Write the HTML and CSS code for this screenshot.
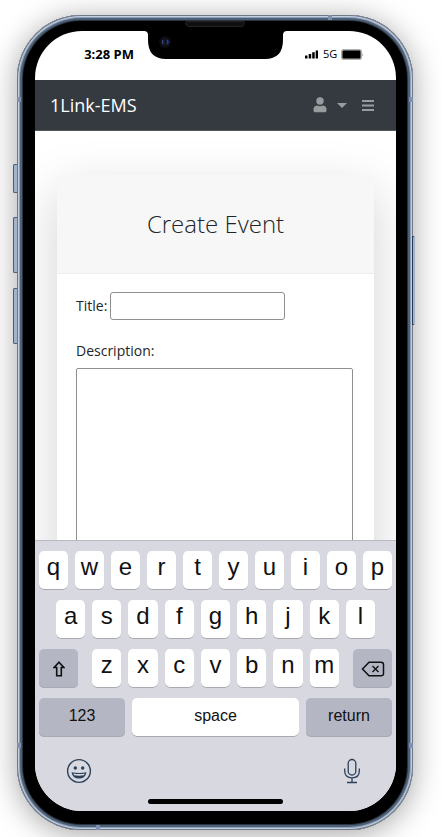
FILE: index.html
```html
<!DOCTYPE html>
<html lang="en">
<head>
<meta charset="utf-8">
<meta name="viewport" content="width=device-width, initial-scale=1">
<title>1Link-EMS</title>
<link rel="stylesheet" href="styles.css">
</head>
<body>
<div class="phone">
  <span class="side-button mute"></span>
  <span class="side-button volume-up"></span>
  <span class="side-button volume-down"></span>
  <span class="side-button power"></span>
  <span class="band band-top"></span>
  <span class="band band-bottom"></span>
  <span class="band band-left-high"></span>
  <span class="band band-left-low"></span>
  <span class="band band-right-high"></span>
  <span class="band band-right-low"></span>
  <span class="speaker"></span>

  <div class="screen">
    <div class="status">
      <span class="time">3:28 PM</span>
      <svg class="notch" width="143" height="29" viewBox="0 0 143 29" aria-hidden="true">
        <path d="M0 0H143Q139 0 139 4V9Q139 28 121 28H22Q4 28 4 9V4Q4 0 0 0Z" fill="#000"/>
        <circle cx="21" cy="11" r="6" fill="#0c0c11"/>
        <circle cx="21" cy="11" r="4" fill="#11131f"/>
        <path d="M19 9Q18 11 19 13" stroke="#3c4c80" stroke-width="1.3" fill="none"/>
        <path d="M23 9Q25 11 23 13" stroke="#26379c" stroke-width="1.6" fill="none"/>
      </svg>
      <div class="indicators">
        <svg width="14" height="9" viewBox="0 0 14 9" aria-hidden="true">
          <path d="M0 5.5h2.5V8.500H0zM3.700 4h2.500v4.500H3.700zM7.200 2.300h2.500v6.200H7.200zM10.700 0.500h2.300v8H10.700z" fill="#000"/>
        </svg>
        <span class="network">5G</span>
        <svg width="23" height="11" viewBox="0 0 23 11" aria-hidden="true">
          <rect x="0" y="0" width="21" height="11" rx="2.800" fill="#b0b0b0"/>
          <rect x="1.500" y="1.500" width="18" height="8" rx="1.300" fill="#000"/>
          <path d="M21.300 3.500Q23 5.500 21.300 7.500Z" fill="#aaa"/>
        </svg>
      </div>
    </div>

    <nav class="navbar">
      <a class="brand" href="#">1Link-EMS</a>
      <button class="nav-button account" type="button" aria-label="Account">
        <svg width="14" height="16" viewBox="0 0 14 16" aria-hidden="true">
          <circle cx="7" cy="4" r="3.700" fill="currentColor"/>
          <path d="M4 8.500Q7 9.800 10 8.500Q13.500 8.900 13.500 12.500V13.500Q13.500 15.300 12 15.300H2Q.5 15.300 .5 13.500V12.500Q.5 8.900 4 8.500Z" fill="currentColor"/>
        </svg>
        <svg width="10" height="5" viewBox="0 0 10 5" aria-hidden="true"><path d="M0 0H10L5 5Z" fill="currentColor"/></svg>
      </button>
      <button class="nav-button" type="button" aria-label="Menu">
        <svg width="12" height="12" viewBox="0 0 12 12" aria-hidden="true"><path d="M0 2H12M0 6.500H12M0 11H12" stroke="currentColor" stroke-width="1.800"/></svg>
      </button>
    </nav>

    <main class="content">
      <section class="card">
        <h1 class="card-title">Create Event</h1>
        <form class="form">
          <div class="field">
            <label for="title">Title:</label>
            <input id="title" class="title-input" type="text">
          </div>
          <label for="description">Description:</label>
          <textarea id="description" class="description"></textarea>
        </form>
      </section>
    </main>

    <div class="keyboard">
      <div class="keys">
        <button class="key" type="button">q</button><button class="key" type="button">w</button><button class="key" type="button">e</button><button class="key" type="button">r</button><button class="key" type="button">t</button><button class="key" type="button">y</button><button class="key" type="button">u</button><button class="key" type="button">i</button><button class="key" type="button">o</button><button class="key" type="button">p</button>
      </div>
      <div class="keys keys-home">
        <button class="key" type="button">a</button><button class="key" type="button">s</button><button class="key" type="button">d</button><button class="key" type="button">f</button><button class="key" type="button">g</button><button class="key" type="button">h</button><button class="key" type="button">j</button><button class="key" type="button">k</button><button class="key" type="button">l</button>
      </div>
      <div class="keys keys-third">
        <button class="key key-icon" type="button" aria-label="Shift">
          <svg width="12" height="16" viewBox="0 0 12 16" aria-hidden="true"><path d="M6 1.300L10.800 6.500H8.300V14.800H3.700V6.500H1.200Z" fill="none" stroke="#111" stroke-width="1.600"/></svg>
        </button>
        <div class="keys letters">
          <button class="key" type="button">z</button><button class="key" type="button">x</button><button class="key" type="button">c</button><button class="key" type="button">v</button><button class="key" type="button">b</button><button class="key" type="button">n</button><button class="key" type="button">m</button>
        </div>
        <button class="key key-icon" type="button" aria-label="Delete">
          <svg width="24" height="16" viewBox="0 0 24 16" aria-hidden="true"><path d="M1.500 8L8 1.200H20Q22.500 1.200 22.500 3.500V12.500Q22.500 14.800 20 14.800H8Z" fill="none" stroke="#111" stroke-width="1.500"/><path d="M11.500 5L17.500 11M17.500 5L11.500 11" stroke="#111" stroke-width="1.400"/></svg>
        </button>
      </div>
      <div class="keys">
        <button class="key key-word key-dark" type="button">123</button>
        <button class="key key-word" type="button">space</button>
        <button class="key key-word key-dark" type="button">return</button>
      </div>
      <div class="tools">
        <button class="tool" type="button" aria-label="Emoji">
          <svg width="26" height="26" viewBox="0 0 26 26" aria-hidden="true">
            <circle cx="13" cy="13" r="11.400" fill="none" stroke="#2b4059" stroke-width="1.400"/>
            <circle cx="9.300" cy="10" r="1.700" fill="#2b4059"/><circle cx="16.700" cy="10" r="1.700" fill="#2b4059"/>
            <path d="M5.500 14.300Q13 15.700 20.500 14.300Q19.500 20.600 13 20.600Q6.500 20.600 5.500 14.300Z" fill="#2b4059"/>
            <path d="M7.300 15.500Q13 16.500 18.700 15.500L17.900 17.300Q13 18.200 8.100 17.300Z" fill="#d8d8e0"/>
          </svg>
        </button>
        <button class="tool" type="button" aria-label="Dictate">
          <svg width="18" height="26" viewBox="0 0 18 26" aria-hidden="true" fill="none" stroke="#2b4059" stroke-width="1.300">
            <rect x="5.200" y="1.500" width="7.600" height="15.500" rx="3.800"/>
            <path d="M1.700 10.500V13Q1.700 19.800 9 19.800Q16.300 19.800 16.300 13V10.500M9 19.800V24.300M4 24.500H14"/>
          </svg>
        </button>
      </div>
      <div class="home-bar"></div>
    </div>
  </div>
</div>
</body>
</html>
```

FILE: styles.css
```css
* {
  box-sizing: border-box;
}

body {
  margin: 0;
  height: 100vh;
  display: flex;
  padding: 15px 29px 7px 17px;
  background: #fff;
  color: #212529;
  font: 14px/20px "Open Sans", "Noto Sans", sans-serif;
}

button {
  margin: 0;
  padding: 0;
  border: 0;
  background: none;
  color: inherit;
  font: inherit;
}

svg {
  display: block;
  flex: none;
}

/* Device frame */
.phone {
  position: relative;
  flex: 1;
  display: flex;
  min-width: 0;
  padding: 16px 17px 19px 18px;
  border-radius: 64px;
  background: #000;
  box-shadow:
    inset 0 0 0 1px #6f7886,
    inset 0 0 0 2px #c3cede,
    inset 0 0 0 3px #8e9fb8,
    inset 0 0 0 5px #4c6078,
    inset 0 0 0 6px #2c333c,
    0 4px 30px rgba(0, 0, 0, 0.36);
}

.side-button {
  position: absolute;
  left: -4px;
  width: 4px;
  border: 1px solid #4d5d73;
  border-right: 0;
  border-radius: 2px 0 0 2px;
  background: #a3b3c9;
}

.mute {
  top: 149px;
  height: 29px;
}

.volume-up {
  top: 202px;
  height: 56px;
}

.volume-down {
  top: 273px;
  height: 56px;
}

.power {
  top: 221px;
  right: -2px;
  left: auto;
  width: 3px;
  height: 89px;
  border: 1px solid #2c394d;
  border-right-color: #a3b3c9;
  border-radius: 0 2px 2px 0;
}

.band {
  position: absolute;
  width: 4px;
  height: 5px;
  background: #7f8fae;
}

.band-top {
  top: 0;
  right: 81px;
}

.band-bottom {
  bottom: 0;
  left: 79px;
}

.band-left-high,
.band-right-high {
  top: 82px;
}

.band-left-low,
.band-right-low {
  bottom: 82px;
}

.band-left-high,
.band-left-low {
  left: 0;
}

.band-right-high,
.band-right-low {
  right: 0;
}

.speaker {
  position: absolute;
  top: 6px;
  left: 50%;
  width: 60px;
  height: 6px;
  margin-left: -30px;
  border: 1px solid #242424;
  border-radius: 2px 2px 4px 4px;
  background: #101010;
}

.screen {
  flex: 1;
  display: flex;
  flex-direction: column;
  min-width: 0;
  overflow: hidden;
  border-radius: 47px;
  background: #fff;
}

/* Status bar */
.status {
  display: grid;
  flex: none;
  grid-template-columns: 1fr auto 1fr;
  height: 49px;
  color: #000;
}

.time {
  padding: 13px 10px 0 0;
  text-align: right;
  font-size: 13px;
  font-weight: 700;
}

.indicators {
  display: flex;
  align-items: center;
  gap: 4px;
  height: 20px;
  margin: 13px 0 0 18px;
}

.network {
  font-size: 11px;
  font-weight: 500;
}

/* App bar */
.navbar {
  display: flex;
  flex: none;
  align-items: center;
  height: 51px;
  padding: 0 22px 0 15px;
  border-bottom: 1px solid #55595e;
  background: #343a40;
  color: #999c9f;
}

.brand {
  margin-right: auto;
  color: #fff;
  font-size: 18px;
  text-decoration: none;
}

.nav-button {
  display: flex;
  align-items: center;
  gap: 10px;
}

.account {
  margin-right: 15px;
}

/* Page */
.content {
  flex: 1;
  min-height: 0;
  overflow: hidden;
  padding: 44px 22px 0;
}

.card {
  background: #fff;
  box-shadow: 0 16px 48px rgba(0, 0, 0, 0.175);
}

.card-title {
  margin: 0;
  padding: 32px 16px;
  border-bottom: 1px solid #eee;
  background: #f7f7f7;
  text-align: center;
  font: 300 24px/34px "Open Sans", sans-serif;
}

.form {
  padding: 18px 21px 40px 19px;
}

.field {
  display: flex;
  align-items: center;
  gap: 3px;
  margin-bottom: 21px;
}

.title-input,
.description {
  border: 1px solid #8f8f8f;
  background: #fff;
  font: inherit;
}

.title-input {
  width: 175px;
  height: 28px;
  border-radius: 3px;
}

.description {
  display: block;
  width: 100%;
  height: 240px;
  margin-top: 7px;
  border-radius: 2px;
  resize: none;
}

/* Keyboard */
.keyboard {
  display: flex;
  flex: none;
  flex-direction: column;
  gap: 10px;
  padding: 10px 4px 7px;
  border-top: 1px solid #b9b9c1;
  background: #d8d8e0;
}

.keys {
  display: flex;
  flex: 1;
  gap: 7px;
}

.keys-home {
  padding: 0 17px;
}

.keys-third {
  gap: 14px;
}

.key {
  display: flex;
  flex: 1 1 0;
  align-items: center;
  justify-content: center;
  min-width: 0;
  height: 39px;
  padding-bottom: 7px;
  border-radius: 5px;
  background: #fff;
  box-shadow: inset 0 -1px #a9a9b1;
  color: #111;
  font: 24px/28px "Liberation Sans", sans-serif;
}

.key-icon {
  flex: 0 0 39px;
  padding: 0;
  background: #b4b6c4;
}

.key-word {
  padding-bottom: 4px;
  font-size: 16px;
}

.key-dark {
  flex: 0 0 86px;
  background: #b4b6c4;
}

.tools {
  display: flex;
  align-items: center;
  justify-content: space-between;
  height: 43px;
  padding: 4px 31px 0 27px;
}

.home-bar {
  width: 135px;
  height: 5px;
  margin: -1px auto 0;
  border-radius: 3px;
  background: #000;
}
```
